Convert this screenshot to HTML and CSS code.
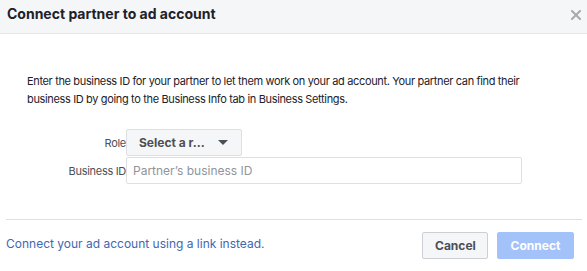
FILE: index.html
```html
<!DOCTYPE html>
<html lang="en">
<head>
<meta charset="utf-8">
<title>Connect partner to ad account</title>
<link rel="stylesheet" href="styles.css">
</head>
<body>
<div class="dialog">
  <div class="header">
    <h1 class="title">Connect partner to ad account</h1>
    <button class="close" aria-label="Close">
      <svg width="10" height="10" viewBox="0 0 10 10"><path d="M1 1 L9 9 M9 1 L1 9" stroke="#a7abb1" stroke-width="2" stroke-linecap="square"/></svg>
    </button>
  </div>
  <div class="body">
    <p class="intro">Enter the business ID for your partner to let them work on your ad account. Your partner can find their business ID by going to the Business Info tab in Business Settings.</p>
    <div class="form">
      <label class="label">Role</label>
      <div class="control">
        <button class="select">Select a r... <span class="caret"></span></button>
      </div>
      <label class="label">Business ID</label>
      <div class="control">
        <input class="input" type="text" placeholder="Partner’s business ID">
      </div>
    </div>
  </div>
  <div class="footer">
    <a class="link" href="#">Connect your ad account using a link instead.</a>
    <div class="actions">
      <button class="btn cancel">Cancel</button>
      <button class="btn connect">Connect</button>
    </div>
  </div>
</div>
</body>
</html>
```

FILE: styles.css
```css
* { box-sizing: border-box; }
html, body { margin: 0; padding: 0; background: #fff; }
body {
  font-family: Inter, "Noto Sans", "Liberation Sans", sans-serif;
  color: #1d2129;
  width: 587px;
  height: 271px;
  overflow: hidden;
}
.dialog { width: 587px; }
.header {
  height: 34px;
  background: #f5f6f7;
  border-bottom: 1px solid #e5e5e5;
  display: flex;
  align-items: flex-start;
  justify-content: space-between;
  padding: 5px 6px 0 7px;
}
.title {
  margin: 0;
  font-size: 14px;
  line-height: 18px;
  font-weight: 700;
  color: #1d2129;
}
.close {
  border: 0;
  background: transparent;
  padding: 0;
  margin-top: 5px;
  width: 10px;
  height: 10px;
  display: flex;
}
.body { padding: 38px 6px 0 6px; }
.intro {
  margin: 0 0 21px 21px;
  font-size: 11px;
  letter-spacing: -0.35px;
  line-height: 18px;
  color: #1d2129;
  width: 505px;
}
.form {
  display: grid;
  grid-template-columns: 120px 396px;
  row-gap: 1px;
  align-items: center;
}
.label {
  text-align: right;
  font-size: 11px;
  letter-spacing: -0.3px;
  color: #4b4f56;
}
.control { display: flex; }
.select {
  height: 27px;
  width: 116px;
  background: #f5f6f7;
  border: 1px solid #dddfe2;
  border-radius: 2px;
  font-family: inherit;
  font-size: 12px;
  font-weight: 700;
  color: #4b4f56;
  display: flex;
  align-items: center;
  justify-content: space-between;
  padding: 0 13px 0 12px;
}
.caret {
  width: 0; height: 0;
  border-left: 5.5px solid transparent;
  border-right: 5.5px solid transparent;
  border-top: 5px solid #4b4f56;
}
.input {
  width: 396px;
  height: 27px;
  border: 1px solid #dddfe2;
  border-radius: 2px;
  padding: 0 6px;
  font-family: inherit;
  font-size: 12px;
  color: #1d2129;
  outline: none;
}
.input::placeholder { color: #90949c; }
.footer {
  margin: 35px 5px 0 6px;
  border-top: 1px solid #dddfe2;
  padding: 12px 8px 0 0;
  display: flex;
  align-items: center;
  justify-content: space-between;
}
.link {
  font-size: 12px;
  color: #4267b2;
  text-decoration: none;
  margin-bottom: 4px;
}
.actions { display: flex; gap: 9px; }
.btn {
  height: 27px;
  border-radius: 2px;
  font-family: inherit;
  font-size: 12px;
  font-weight: 700;
  padding: 0 12px;
}
.cancel {
  width: 66px;
  background: #f5f6f7;
  border: 1px solid #ccd0d5;
  color: #4b4f56;
}
.connect {
  width: 77px;
  background: #a4c2fa;
  border: 1px solid #a4c2fa;
  color: #fff;
}
```
